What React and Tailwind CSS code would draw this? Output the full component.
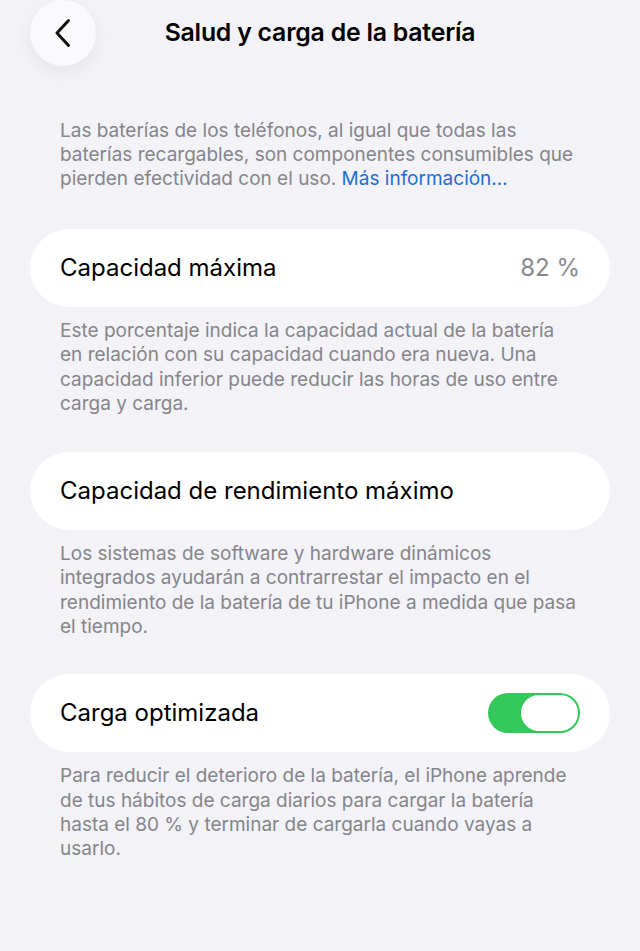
import React, { useState } from "react";

const font = { fontFamily: "Inter, 'Noto Sans', sans-serif" };

function BackButton() {
  return (
    <button className="w-[66px] h-[66px] rounded-full bg-[#fafafc] shadow-[0_6px_18px_rgba(0,0,0,0.06)] flex items-center justify-center">
      <svg width="20" height="30" viewBox="0 0 20 30" fill="none">
        <path d="M15.5 2.5 L4 15 L15.5 27.5" stroke="#111" strokeWidth="3" strokeLinecap="round" strokeLinejoin="round" />
      </svg>
    </button>
  );
}

function Toggle({ on, onChange }) {
  return (
    <button
      onClick={() => onChange(!on)}
      className={`w-[92px] h-[40px] rounded-full p-[2px] flex ${on ? "bg-[#34c759] justify-end" : "bg-[#e5e5ea] justify-start"}`}
    >
      <span className="w-[57px] h-[36px] rounded-full bg-white"></span>
    </button>
  );
}

function Card({ children }) {
  return (
    <div className="mx-[30px] h-[78px] rounded-[39px] bg-white px-[30px] flex items-center justify-between">
      {children}
    </div>
  );
}

// lines are broken by hand so each footnote wraps the same way on every width
function Footnote({ lines }) {
  return (
    <p className="px-[60px] mt-[12px] text-[19px] leading-[24.3px] text-[#85858a] whitespace-nowrap">
      {lines.map((l, i) => (
        <span key={i} className="block">{l}</span>
      ))}
    </p>
  );
}

export default function App() {
  const [optimized, setOptimized] = useState(true);

  return (
    <div className="min-h-[951px] bg-[#f2f2f7] pb-10" style={font}>
      <div className="h-[66px] grid grid-cols-[1fr_auto_1fr] items-center">
        <div className="pl-[30px]">
          <BackButton />
        </div>
        <h1 className="text-[24.8px] font-semibold text-black tracking-[-0.2px]">
          Salud y carga de la batería
        </h1>
        <div></div>
      </div>

      <p className="px-[60px] mt-[53px] text-[19px] leading-[24px] text-[#85858a] whitespace-nowrap">
        <span className="block">Las baterías de los teléfonos, al igual que todas las</span>
        <span className="block">baterías recargables, son componentes consumibles que</span>
        <span className="block">
          pierden efectividad con el uso. <span className="text-[#1c6fd1]">Más información…</span>
        </span>
      </p>

      <div className="mt-[38px]">
        <Card>
          <span className="text-[24px] text-black">Capacidad máxima</span>
          <span className="text-[24px] text-[#8a8a8e]">82 %</span>
        </Card>
        <Footnote
          lines={[
            "Este porcentaje indica la capacidad actual de la batería",
            "en relación con su capacidad cuando era nueva. Una",
            "capacidad inferior puede reducir las horas de uso entre",
            "carga y carga.",
          ]}
        />
      </div>

      <div className="mt-[36px]">
        <Card>
          <span className="text-[24px] text-black">Capacidad de rendimiento máximo</span>
        </Card>
        <Footnote
          lines={[
            "Los sistemas de software y hardware dinámicos",
            "integrados ayudarán a contrarrestar el impacto en el",
            "rendimiento de la batería de tu iPhone a medida que pasa",
            "el tiempo.",
          ]}
        />
      </div>

      <div className="mt-[35px]">
        <Card>
          <span className="text-[24px] text-black">Carga optimizada</span>
          <Toggle on={optimized} onChange={setOptimized} />
        </Card>
        <Footnote
          lines={[
            "Para reducir el deterioro de la batería, el iPhone aprende",
            "de tus hábitos de carga diarios para cargar la batería",
            "hasta el 80 % y terminar de cargarla cuando vayas a",
            "usarlo.",
          ]}
        />
      </div>
    </div>
  );
}
